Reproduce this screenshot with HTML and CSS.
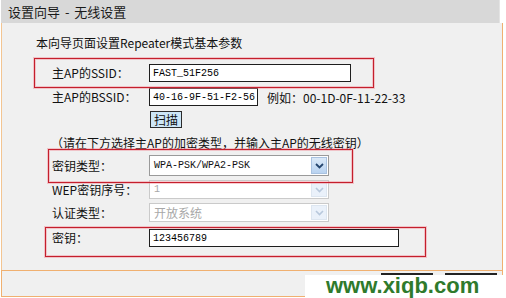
FILE: index.html
```html
<!DOCTYPE html>
<html lang="zh-CN">
<head>
    <meta charset="UTF-8">
    <title>设置向导 - 无线设置</title>
    <link rel="stylesheet" href="styles.css">
</head>
<body>
    <div class="page">
        <div class="title">设置向导 - 无线设置</div>
        <div class="panel">
            <div class="intro">本向导页面设置Repeater模式基本参数</div>

            <div class="row row-ssid">
                <span class="label">主AP的SSID：</span>
                <input class="field w-ssid" type="text" value="FAST_51F256">
            </div>
            <div class="row row-bssid">
                <span class="label">主AP的BSSID：</span>
                <input class="field w-bssid" type="text" value="40-16-9F-51-F2-56">
                <span class="hint">例如：00-1D-0F-11-22-33</span>
            </div>
            <div class="row row-scan">
                <span class="label"></span>
                <button class="scan" type="button">扫描</button>
            </div>

            <div class="note">（请在下方选择主AP的加密类型，并输入主AP的无线密钥）</div>

            <div class="row row-keytype">
                <span class="label">密钥类型：</span>
                <div class="select">
                    <span class="select-value">WPA-PSK/WPA2-PSK</span>
                    <span class="select-arrow">
                        <svg width="9" height="6" viewBox="0 0 9 6"><path d="M1 1 L4.5 4.5 L8 1" fill="none" stroke="#24456e" stroke-width="1.8"/></svg>
                    </span>
                </div>
            </div>
            <div class="row row-wep">
                <span class="label">WEP密钥序号：</span>
                <div class="select disabled">
                    <span class="select-value">1</span>
                    <span class="select-arrow">
                        <svg width="9" height="6" viewBox="0 0 9 6"><path d="M1 1 L4.5 4.5 L8 1" fill="none" stroke="#b8c8dc" stroke-width="1.6"/></svg>
                    </span>
                </div>
            </div>
            <div class="row row-auth">
                <span class="label">认证类型：</span>
                <div class="select disabled">
                    <span class="select-value cjk">开放系统</span>
                    <span class="select-arrow">
                        <svg width="9" height="6" viewBox="0 0 9 6"><path d="M1 1 L4.5 4.5 L8 1" fill="none" stroke="#b8c8dc" stroke-width="1.6"/></svg>
                    </span>
                </div>
            </div>
            <div class="row row-key">
                <span class="label">密钥：</span>
                <input class="field w-key" type="text" value="123456789">
            </div>
        </div>
        <div class="footer">
            <!-- button captions are hidden under the watermark -->
            <button class="btn" type="button" aria-label="上一步"></button>
            <button class="btn" type="button" aria-label="下一步"></button>
        </div>

        <!-- annotation boxes drawn over the form -->
        <div class="mark mark-1"></div>
        <div class="mark mark-2"></div>
        <div class="mark mark-3"></div>

        <div class="watermark">www.xiqb.com</div>
    </div>
</body>
</html>
```

FILE: styles.css
```css
body {
    margin: 0;
    background: #fff;
    font-family: "Noto Sans CJK SC", "DejaVu Sans", sans-serif;
    font-size: 12px;
    color: #111;
}
.page {
    position: relative;
    width: 502px;
    height: 298px;
    margin-left: 1px;
}
.title {
    height: 23px;
    line-height: 23px;
    padding-left: 7px;
    background: #d8d8d8;
    font-size: 13px;
    color: #1a1a1a;
    border-right: 1px solid #e4e4e4;
    margin-right: 3px;
    word-spacing: 2px;
}
.panel {
    height: 247px;
    box-sizing: border-box;
    padding-top: 13px;
    padding-left: 50px;
    background: #f0f0f0;
    border-left: 1px solid #f3c592;
    border-right: 1px solid #f0b070;
}
.intro {
    margin-left: -16px;
    height: 13px;
    line-height: 13px;
}
.row {
    display: flex;
    align-items: center;
}
.label {
    width: 97px;
    flex-shrink: 0;
    line-height: 14px;
}
.row-ssid { margin-top: 15px; height: 18px; }
.row-bssid { margin-top: 6px; height: 18px; }
.row-scan { margin-top: 5px; height: 17px; }
.row-keytype { margin-top: 6px; height: 21px; }
.row-wep { margin-top: 4px; height: 19px; }
.row-auth { margin-top: 4px; height: 19px; }
.row-key { margin-top: 7px; height: 18px; }

.field {
    box-sizing: border-box;
    height: 18px;
    margin: 0;
    padding: 0 0 0 3px;
    border: 1px solid #1e1e1e;
    background: #fff;
    font-family: "Liberation Mono", monospace;
    font-size: 10px;
    color: #000;
}
.w-ssid { width: 202px; }
.w-bssid { width: 109px; }
.w-key { width: 250px; }
.hint {
    margin-left: 9px;
    white-space: nowrap;
}
.scan {
    box-sizing: border-box;
    height: 17px;
    width: 32px;
    margin-left: 1px;
    padding: 0;
    background: #cde6f7;
    border: 1px solid #2b2b2b;
    font-family: inherit;
    font-size: 12px;
    line-height: 14px;
    color: #111;
}
.note {
    margin-top: 8px;
    margin-left: -1px;
    height: 13px;
    line-height: 13px;
    white-space: nowrap;
}
.select {
    box-sizing: border-box;
    width: 180px;
    height: 100%;
    display: flex;
    align-items: center;
    justify-content: space-between;
    background: #fff;
    border: 1px solid #9a9a9a;
    padding-left: 4px;
}
.select-value {
    font-family: "Liberation Mono", monospace;
    font-size: 10px;
}
.select-value.cjk {
    font-family: "Noto Sans CJK SC", sans-serif;
    font-size: 12px;
}
.select-arrow {
    width: 16px;
    height: calc(100% - 2px);
    margin-right: 1px;
    display: flex;
    align-items: center;
    justify-content: center;
    background: linear-gradient(#dbe9f8, #b9d3f0);
    border: 1px solid #a9c2e0;
    box-sizing: border-box;
}
.select.disabled {
    border-color: #cacaca;
    color: #a8a8a8;
}
.select.disabled .select-arrow {
    background: #eaf1fa;
    border-color: #dde6f0;
}
.footer {
    background: #f0f0f0;
    border: 1px solid #f0b070;
    display: flex;
    justify-content: flex-end;
    gap: 12px;
    padding-right: 5px;
    padding-top: 2px;
    height: 23px;
}
.btn {
    width: 52px;
    height: 20px;
    border: 2px solid #222;
    background: #e8e8e8;
}
.mark {
    position: absolute;
    box-sizing: border-box;
    border: 1px solid #c41f2c;
    box-shadow: 0 0 0 1px rgba(240, 140, 150, 0.45), inset 0 0 0 1px rgba(240, 140, 150, 0.45);
}
.mark-1 { left: 33px; top: 58px; width: 340px; height: 30px; }
.mark-2 { left: 47px; top: 149px; width: 305px; height: 34px; }
.mark-3 { left: 44px; top: 227px; width: 381px; height: 30px; }
.watermark {
    position: absolute;
    left: 304px;
    top: 275px;
    width: 198px;
    height: 23px;
    background: #fff;
    padding-left: 21px;
    box-sizing: border-box;
    font-family: "Liberation Sans", Arial, sans-serif;
    font-weight: bold;
    font-size: 22px;
    line-height: 22px;
    color: #2f7a2c;
    overflow: hidden;
    white-space: nowrap;
}
```
